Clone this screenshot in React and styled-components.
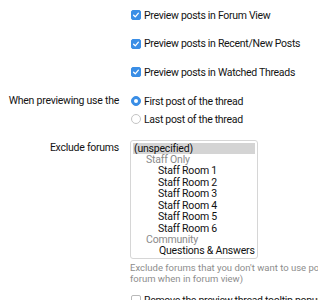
import React from "react";
import styled, { createGlobalStyle } from "styled-components";

const Global = createGlobalStyle`
  html, body { margin: 0; padding: 0; background: #fff; overflow: hidden; }
  body { font-family: Roboto, "Liberation Sans", Arial, sans-serif; color: #141414; }
`;

const Form = styled.div`
  padding-top: 1px;
  width: 318px;
  overflow: hidden;
`;

const Row = styled.div`
  display: grid;
  grid-template-columns: 119px 1fr;
  column-gap: 11px;
  padding-top: ${(p) => p.$pt || 0}px;
`;

const Label = styled.div`
  text-align: right;
  font-size: 10.5px;
  letter-spacing: -0.25px;
  line-height: ${(p) => p.$lh || 18}px;
  white-space: nowrap;
  padding-top: ${(p) => p.$pt || 0}px;
`;

const Controls = styled.div`
  display: flex;
  flex-direction: column;
  min-width: 0;
`;

const Choice = styled.label`
  display: flex;
  align-items: center;
  gap: 3px;
  height: ${(p) => p.$h || 18}px;
  font-size: 10.5px;
  letter-spacing: -0.3px;
  white-space: nowrap;
  padding-left: 1px;
`;

const Box = styled.span`
  width: 10px;
  height: 10px;
  border-radius: 2px;
  box-sizing: border-box;
  display: inline-flex;
  align-items: center;
  justify-content: center;
  background: ${(p) => (p.$on ? "#3a8ee6" : "#fff")};
  border: 1px solid ${(p) => (p.$on ? "#3a8ee6" : "#b9b9b9")};
  flex: none;
`;

const Radio = styled.span`
  width: 10px;
  height: 10px;
  border-radius: 50%;
  box-sizing: border-box;
  display: inline-flex;
  align-items: center;
  justify-content: center;
  background: ${(p) => (p.$on ? "#3a8ee6" : "#fff")};
  border: 1px solid ${(p) => (p.$on ? "#3a8ee6" : "#c4c4c4")};
  flex: none;
  &::after {
    content: "";
    width: 4px;
    height: 4px;
    border-radius: 50%;
    background: #fff;
    display: ${(p) => (p.$on ? "block" : "none")};
  }
`;

const ListBox = styled.div`
  width: 128px;
  box-sizing: border-box;
  border: 1px solid #d6d6d6;
  border-radius: 3px;
  padding: 2px 2px 1px;
  background: #fff;
`;

const Option = styled.div`
  height: 11.45px;
  line-height: 11.45px;
  font-size: 10.5px;
  letter-spacing: -0.2px;
  white-space: nowrap;
  overflow: hidden;
  padding-left: ${(p) => p.$indent || 1}px;
  color: ${(p) => (p.$group ? "#8a8a8a" : "#111")};
  background: ${(p) => (p.$selected ? "#d4d4d4" : "transparent")};
`;

const Hint = styled.div`
  margin-top: 4px;
  font-size: 9.5px;
  line-height: 10.8px;
  color: #8d8d8d;
`;

const HintLine = styled.span`
  display: block;
  white-space: nowrap;
`;

const Check = () => (
  <svg width="8" height="8" viewBox="0 0 8 8">
    <path d="M1.6 4.2 L3.3 5.8 L6.4 2.2" fill="none" stroke="#fff" strokeWidth="1.3" strokeLinecap="round" strokeLinejoin="round" />
  </svg>
);

const options = [
  { t: "(unspecified)", indent: 1, selected: true },
  { t: "Staff Only", indent: 13, group: true },
  { t: "Staff Room 1", indent: 25 },
  { t: "Staff Room 2", indent: 25 },
  { t: "Staff Room 3", indent: 25 },
  { t: "Staff Room 4", indent: 25 },
  { t: "Staff Room 5", indent: 25 },
  { t: "Staff Room 6", indent: 25 },
  { t: "Community", indent: 13, group: true },
  { t: "Questions & Answers", indent: 26 },
];

export default function App() {
  return (
    <>
      <Global />
      <Form>
        {["Preview posts in Forum View", "Preview posts in Recent/New Posts", "Preview posts in Watched Threads"].map((t) => (
          <Row key={t}>
            <span />
            <Controls>
              <Choice $h={28.5}>
                <Box $on><Check /></Box>
                {t}
              </Choice>
            </Controls>
          </Row>
        ))}
        <Row $pt={5.5}>
          <Label>When previewing use the</Label>
          <Controls>
            <Choice>
              <Radio $on />
              First post of the thread
            </Choice>
            <Choice>
              <Radio />
              Last post of the thread
            </Choice>
          </Controls>
        </Row>
        <Row $pt={11.5}>
          <Label $pt={2.8} $lh={11.45}>Exclude forums</Label>
          <Controls>
            <ListBox>
              {options.map((o) => (
                <Option key={o.t} $indent={o.indent} $group={o.group} $selected={o.selected}>
                  {o.t}
                </Option>
              ))}
            </ListBox>
            <Hint>
              <HintLine>Exclude forums that you don't want to use post previews in (this only applies to the</HintLine>
              <HintLine>forum when in forum view)</HintLine>
            </Hint>
          </Controls>
        </Row>
        <Row $pt={7}>
          <span />
          <Controls>
            <Choice>
              <Box />
              Remove the preview thread tooltip popup
            </Choice>
          </Controls>
        </Row>
      </Form>
    </>
  );
}
